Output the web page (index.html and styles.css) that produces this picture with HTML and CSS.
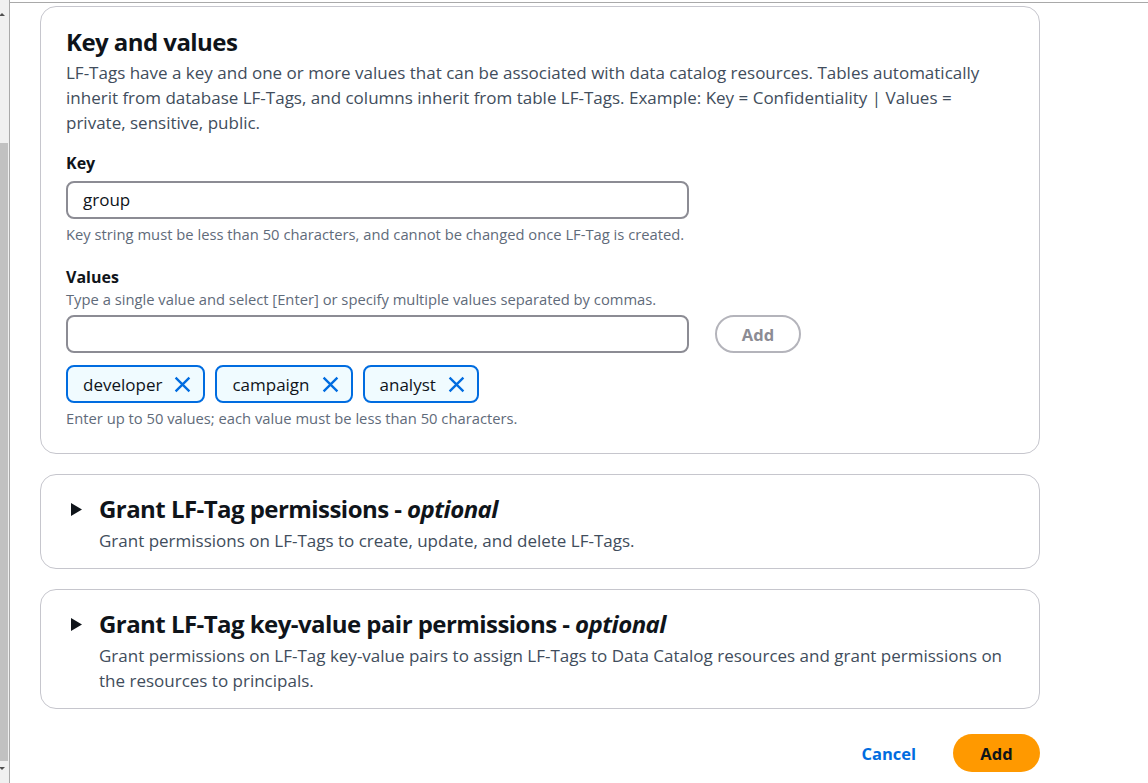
FILE: index.html
```html
<!DOCTYPE html>
<html lang="en">
<head>
<meta charset="utf-8">
<title>Create LF-Tag</title>
<link rel="stylesheet" href="styles.css">
</head>
<body>
<div class="scrollbar">
  <div class="sb-top"><span class="sb-arrow-up"></span></div>
  <div class="sb-thumb"></div>
  <div class="sb-bottom"><span class="sb-arrow-down"></span></div>
</div>
<div class="main">
  <div class="content">
    <section class="panel panel-main">
      <h2 class="panel-title">Key and values</h2>
      <p class="panel-desc">LF-Tags have a key and one or more values that can be associated with data catalog resources. Tables automatically inherit from database LF-Tags, and columns inherit from table LF-Tags. Example: Key = Confidentiality | Values = private, sensitive, public.</p>

      <div class="field field-key">
        <div class="label">Key</div>
        <div class="input-row">
          <div class="input">group</div>
        </div>
        <div class="hint hint-after">Key string must be less than 50 characters, and cannot be changed once LF-Tag is created.</div>
      </div>

      <div class="field field-values">
        <div class="label">Values</div>
        <div class="hint hint-desc">Type a single value and select [Enter] or specify multiple values separated by commas.</div>
        <div class="input-row input-row-values">
          <div class="input"></div>
          <button class="btn-secondary">Add</button>
        </div>
        <div class="tokens">
          <div class="token"><span>developer</span><svg class="x" viewBox="0 0 16 16"><path d="M1.5 1.5L14.5 14.5M14.5 1.5L1.5 14.5"/></svg></div>
          <div class="token"><span>campaign</span><svg class="x" viewBox="0 0 16 16"><path d="M1.5 1.5L14.5 14.5M14.5 1.5L1.5 14.5"/></svg></div>
          <div class="token"><span>analyst</span><svg class="x" viewBox="0 0 16 16"><path d="M1.5 1.5L14.5 14.5M14.5 1.5L1.5 14.5"/></svg></div>
        </div>
        <div class="hint hint-after">Enter up to 50 values; each value must be less than 50 characters.</div>
      </div>
    </section>

    <section class="panel panel-exp">
      <div class="exp-head">
        <svg class="caret" viewBox="0 0 11 13"><path d="M0 0L11 6.5L0 13Z"/></svg>
        <div class="exp-body">
          <h2 class="panel-title">Grant LF-Tag permissions - <em>optional</em></h2>
          <p class="panel-desc">Grant permissions on LF-Tags to create, update, and delete LF-Tags.</p>
        </div>
      </div>
    </section>

    <section class="panel panel-exp">
      <div class="exp-head">
        <svg class="caret" viewBox="0 0 11 13"><path d="M0 0L11 6.5L0 13Z"/></svg>
        <div class="exp-body">
          <h2 class="panel-title">Grant LF-Tag key-value pair permissions - <em>optional</em></h2>
          <p class="panel-desc">Grant permissions on LF-Tag key-value pairs to assign LF-Tags to Data Catalog resources and grant permissions on the resources to principals.</p>
        </div>
      </div>
    </section>

    <div class="actions">
      <button class="btn-link">Cancel</button>
      <button class="btn-primary">Add</button>
    </div>
  </div>
</div>
</body>
</html>
```

FILE: styles.css
```css
* { box-sizing: border-box; }

html, body {
  margin: 0;
  padding: 0;
  height: 783px;
  overflow: hidden;
  background: #ffffff;
}

body {
  display: flex;
  font-family: "Open Sans", "Noto Sans", sans-serif;
  color: #0f141a;
}

/* left scrollbar strip */
.scrollbar {
  width: 10px;
  flex: none;
  background: #f0f0f0;
  border-right: 1px solid #a9a9a9;
  display: flex;
  flex-direction: column;
}
.sb-top {
  height: 143px;
  padding-top: 13px;
}
.sb-arrow-up {
  display: block;
  width: 0;
  height: 0;
  border-left: 3px solid transparent;
  border-right: 3px solid transparent;
  border-bottom: 3px solid #505050;
  margin-left: -1px;
}
.sb-thumb {
  width: 8px;
  height: 618px;
  background: #c1c1c1;
}
.sb-bottom {
  flex: 1;
  padding-top: 6px;
}
.sb-arrow-down {
  display: block;
  width: 0;
  height: 0;
  border-left: 3px solid transparent;
  border-right: 3px solid transparent;
  border-top: 3px solid #505050;
  margin-left: -1px;
}

.main {
  flex: 1;
  margin-top: 2px;
  border-top: 1px solid #a9a9a9;
}

.content {
  width: 1030px;
  padding: 3px 0 0 30px;
  display: flex;
  flex-direction: column;
  gap: 20px;
}

.panel {
  width: 1000px;
  border: 1px solid #c6c6cd;
  border-radius: 16px;
  background: #fff;
}

.panel-main {
  padding: 20px 25px 25px 25px;
}

.panel-title {
  margin: 0 0 3px 0;
  font-size: 24px;
  line-height: 30px;
  font-weight: 700;
  color: #0f141a;
  letter-spacing: -0.55px;
}
.panel-title em {
  font-weight: 700;
  font-style: italic;
}

.panel-desc {
  margin: 0;
  font-size: 17px;
  line-height: 25px;
  color: #414d5c;
}

.field-key { margin-top: 17px; }
.field-values { margin-top: 22px; }

.label {
  font-size: 16px;
  line-height: 22px;
  font-weight: 700;
  color: #0f141a;
}

.input-row {
  display: flex;
  align-items: center;
  gap: 26px;
  margin-top: 7px;
}
.input-row-values { margin-top: 6px; }

.input {
  width: 623px;
  height: 38px;
  border: 2px solid #8c8c94;
  border-radius: 8px;
  padding: 0 15px;
  font-size: 17px;
  line-height: 34px;
  color: #0f141a;
}

.hint {
  font-size: 14.75px;
  line-height: 20px;
  color: #5f6b7a;
}
.hint-desc { margin-top: 1px; }
.hint-after { margin-top: 5px; }

.btn-secondary {
  width: 86px;
  height: 38px;
  border: 2px solid #b4b4bb;
  border-radius: 20px;
  background: #fff;
  font-family: "Open Sans", "Noto Sans", sans-serif;
  font-size: 16.5px;
  font-weight: 700;
  color: #8c8c94;
  padding: 0;
}

.tokens {
  display: flex;
  gap: 10px;
  margin-top: 12px;
}

.token {
  height: 38px;
  display: flex;
  align-items: center;
  gap: 12px;
  padding: 0 12px 0 15px;
  border: 2px solid #006ce0;
  border-radius: 8px;
  background: #f0fbff;
  font-size: 17px;
  color: #0f141a;
}

.x {
  width: 17px;
  height: 17px;
  fill: none;
  stroke: #006ce0;
  stroke-width: 2.2;
}

.panel-exp {
  padding: 19px 25px 15px 30px;
}
.panel-exp .panel-title { margin-bottom: 4px; }

.exp-head {
  display: flex;
  align-items: flex-start;
  gap: 17px;
}

.caret {
  width: 11px;
  height: 13px;
  margin-top: 9px;
  fill: #0f141a;
  flex: none;
}

.exp-body { flex: 1; }

.actions {
  display: flex;
  justify-content: flex-end;
  align-items: center;
  width: 1000px;
  margin-top: 5px;
  gap: 19px;
}

.btn-link {
  background: none;
  border: none;
  padding: 0 18px;
  height: 38px;
  font-family: "Open Sans", "Noto Sans", sans-serif;
  font-size: 16.5px;
  font-weight: 700;
  color: #006ce0;
}

.btn-primary {
  width: 87px;
  height: 38px;
  border: none;
  border-radius: 20px;
  background: #ff9900;
  font-family: "Open Sans", "Noto Sans", sans-serif;
  font-size: 16.5px;
  font-weight: 700;
  color: #0f141a;
  padding: 0;
}
```
